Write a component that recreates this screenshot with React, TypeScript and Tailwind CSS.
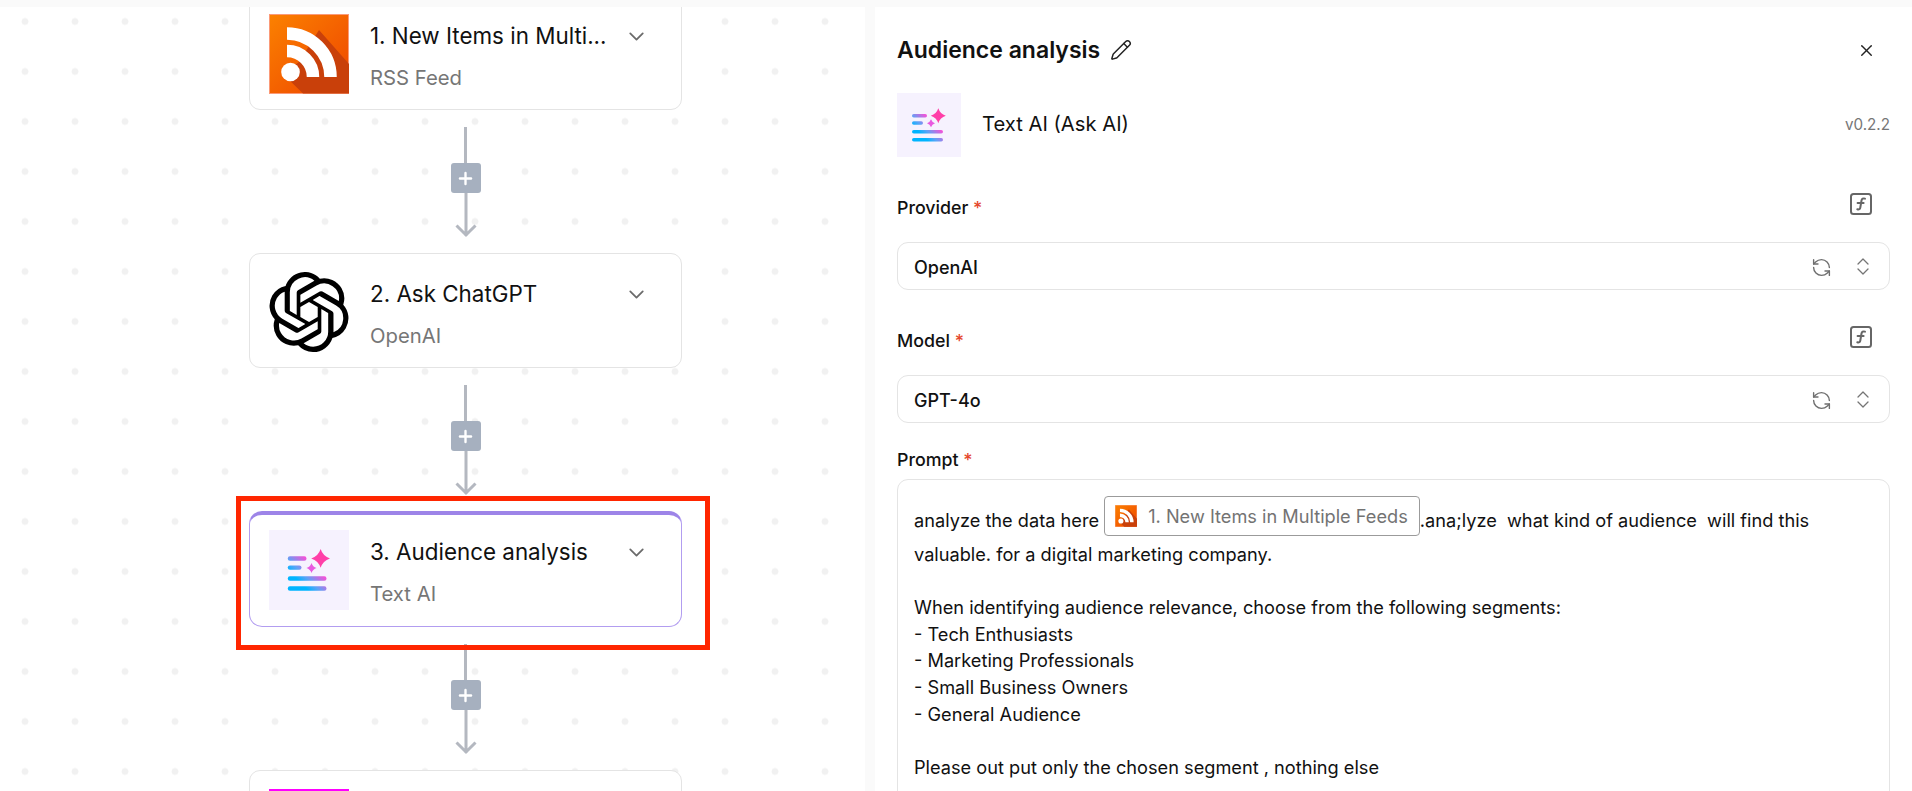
import { ChevronDown, Pencil, Plus, RefreshCcw, X } from 'lucide-react';
import { SiOpenai } from 'react-icons/si';

function RssIcon({ size }: { size: number }) {
  return (
    <svg width={size} height={size} viewBox="0 0 80 80" className="shrink-0">
      <defs>
        <linearGradient id="rssBg" x1="0" y1="0" x2="1" y2="1">
          <stop offset="0" stopColor="#fb8100" />
          <stop offset="1" stopColor="#ee4400" />
        </linearGradient>
      </defs>
      <rect x="0.5" y="0.5" width="79" height="79" fill="url(#rssBg)" stroke="#fb9a78" />
      <polygon points="50,16 80,50 80,79.5 34,79.5 14,60 30,48" fill="#c9400a" />
      <circle cx="21.5" cy="58" r="9.3" fill="#fff" />
      <path d="M18 19.5A43.5 43.5 0 0 1 61.5 63M18 37A26 26 0 0 1 44 63" fill="none" stroke="#fff" strokeWidth="12.5" />
    </svg>
  );
}

function TextAiIcon({ size }: { size: number }) {
  return (
    <svg width={size} height={size} viewBox="0 0 64 64" className="shrink-0">
      <defs>
        <linearGradient id="aiBar" gradientUnits="userSpaceOnUse" x1="15" y1="50" x2="45" y2="20">
          <stop offset="0.3" stopColor="#00b4ff" />
          <stop offset="0.45" stopColor="#5fa2f6" />
          <stop offset="0.7" stopColor="#f452d8" />
        </linearGradient>
      </defs>
      <rect width="64" height="64" fill="#f6f2fe" />
      <rect x="15" y="21" width="15" height="3.5" rx="1.75" fill="url(#aiBar)" />
      <rect x="15" y="28.3" width="11" height="3.5" rx="1.75" fill="url(#aiBar)" />
      <rect x="15" y="37" width="31" height="3.5" rx="1.75" fill="url(#aiBar)" />
      <rect x="15" y="45" width="31" height="3.5" rx="1.75" fill="url(#aiBar)" />
      <path d="M41.3 15.2Q43.1 20.9 48.8 22.7 43.1 24.5 41.3 30.2 39.5 24.5 33.8 22.7 39.5 20.9 41.3 15.2Z" fill="#ff3fa8" />
      <path d="M34 26.3Q35 29.3 38 30.3 35 31.3 34 34.3 33 31.3 30 30.3 33 29.3 34 26.3Z" fill="#e85ae0" />
    </svg>
  );
}

function FxIcon() {
  return (
    <svg width="22" height="22" viewBox="0 0 22 22" fill="none" stroke="#666" className="shrink-0">
      <rect x="1" y="1" width="20" height="20" rx="2.5" strokeWidth="2" />
      <path d="M15 5.6c-1.9-.6-3.2.1-3.5 1.9l-1.2 7c-.3 1.7-1.3 2.3-3 1.8M7.6 10h6" strokeWidth="2" strokeLinecap="round" />
    </svg>
  );
}

function UpDown() {
  return (
    <svg width="12" height="17" viewBox="0 0 12 17" fill="none" stroke="#757575" strokeWidth="1.3" strokeLinecap="round" strokeLinejoin="round" className="shrink-0">
      <path d="M1 6l5-5 5 5M1 11l5 5 5-5" />
    </svg>
  );
}

function Connector() {
  return (
    <div className="flex h-[143px] w-[30px] shrink-0 flex-col items-center pt-[17px]">
      <div className="h-[36px] w-[3px] bg-[#b4b8c0]" />
      <div className="flex h-[30px] w-[30px] shrink-0 items-center justify-center rounded-[3px] bg-[#a6b0bf]">
        <Plus size={19} strokeWidth={3} color="#fff" />
      </div>
      <svg width="24" height="45" viewBox="0 0 24 45" fill="none" stroke="#b4b8c0" strokeWidth="3" className="shrink-0">
        <path d="M12 0v43M2.5 32.5L12 42l9.5-9.5" />
      </svg>
    </div>
  );
}

function NodeText({ title, sub }: { title: string; sub: string }) {
  return (
    <div className="min-w-0 flex-1">
      <div className="mt-[4px] flex h-[36px] items-center">
        <span className="w-[255px] whitespace-nowrap text-[22.4px] text-[#111]">{title}</span>
        <ChevronDown size={25} strokeWidth={1.7} color="#6b6b6b" className="ml-[-1px]" />
      </div>
      <div className="mt-[10px] text-[20.3px] leading-[28px] text-[#767676]">{sub}</div>
    </div>
  );
}

function NodeCard({ title, sub, icon }: { title: string; sub: string; icon: React.ReactNode }) {
  return (
    <div className="flex h-[115px] w-[433px] shrink-0 gap-[21px] rounded-[11px] border border-[#e4e4e4] bg-white pt-[18px] pl-[19px]">
      {icon}
      <NodeText title={title} sub={sub} />
    </div>
  );
}

function SelectField({ label, value }: { label: string; value: string }) {
  return (
    <div>
      <div className="flex h-[22px] items-center justify-between pr-[18px]">
        <span className="relative top-[4px] text-[17.8px] font-medium text-[#111]">
          {label} <span className="text-[#e5482d]">*</span>
        </span>
        <FxIcon />
      </div>
      <div className="mt-[27px] flex h-[48px] items-center rounded-[11px] border border-[#e4e4e4] pl-[16px] pr-[20px] text-[18px] font-medium text-[#111]">
        <span className="flex-1 pt-[2px]">{value}</span>
        <RefreshCcw size={21} strokeWidth={1.6} color="#6f6f6f" className="mr-[25px] mt-[2px]" />
        <UpDown />
      </div>
    </div>
  );
}

export default function App() {
  return (
    <div className="flex h-[791px] w-full flex-col overflow-hidden bg-white font-['Inter',sans-serif]">
      <div className="h-[7px] shrink-0 bg-[#fafafa]" />
      <div className="flex min-h-0 flex-1">
        {/* canvas */}
        <div className="relative w-[865px] shrink-0 overflow-hidden bg-[radial-gradient(circle,#f1f1f1_3.2px,transparent_3.8px)] bg-[size:50px_50px] bg-[position:0_-10.5px]">
          <div className="ml-[249px] mt-[-12px] flex w-[433px] flex-col items-center">
            <NodeCard title="1. New Items in Multi..." sub="RSS Feed" icon={<RssIcon size={80} />} />
            <Connector />
            <NodeCard title="2. Ask ChatGPT" sub="OpenAI" icon={<SiOpenai size={80} color="#000" className="shrink-0" />} />
            <Connector />
            <div className="flex h-[116px] w-[433px] shrink-0 gap-[21px] rounded-[13px] border border-t-[4px] border-[#b29df0] border-t-[#9d84e8] bg-white pt-[15px] pl-[19px]">
              <TextAiIcon size={80} />
              <NodeText title="3. Audience analysis" sub="Text AI" />
            </div>
            <Connector />
            <div className="h-[115px] w-[433px] shrink-0 rounded-[11px] border border-[#e4e4e4] bg-white pl-[19px] pt-[18px]">
              <div className="h-[80px] w-[80px] bg-[#ff00ff]" />
            </div>
          </div>
          {/* red annotation box */}
          <div className="absolute left-[236px] top-[489px] h-[154px] w-[474px] border-[5px] border-[#ff2600]" />
        </div>

        {/* side panel */}
        <div className="min-w-0 flex-1 border-l-[10px] border-[#fafafa] pl-[22px] pr-[22px]">
          <div className="mt-[26px] flex h-[34px] items-center">
            <span className="text-[23px] font-semibold text-[#111]">Audience analysis</span>
            <Pencil size={22} strokeWidth={1.6} color="#222" className="ml-[10px]" />
            <X size={19} strokeWidth={1.8} color="#222" className="ml-auto mr-[14px]" />
          </div>
          <div className="mt-[26px] flex h-[64px] items-center">
            <TextAiIcon size={64} />
            <span className="ml-[21px] flex-1 -translate-y-[1px] text-[20.2px] text-[#111]">Text AI (Ask AI)</span>
            <span className="text-[15.2px] text-[#767676]">v0.2.2</span>
          </div>
          <div className="mt-[36px]">
            <SelectField label="Provider" value="OpenAI" />
          </div>
          <div className="mt-[36px]">
            <SelectField label="Model" value="GPT-4o" />
          </div>
          <div className="mt-[25px] h-[24px] text-[17.8px] font-medium leading-[24px] text-[#111]">
            Prompt <span className="text-[#e5482d]">*</span>
          </div>
          <div className="mt-[7px] h-[400px] whitespace-pre-wrap rounded-[11px] border border-[#e4e4e4] pl-[16px] pt-[16px] text-[18.2px] leading-[26.6px] text-[#111]">
            analyze the data here{' '}
            <span className="mb-[5px] inline-flex h-[40px] items-center rounded-[4px] border border-[#9b9b9b] pl-[10px] pr-[11px] align-baseline text-[#737373]">
              <RssIcon size={22} />
              <span className="ml-[11px]">1. New Items in Multiple Feeds</span>
            </span>
            .ana;lyze  what kind of audience  will find this
            <br />
            valuable. for a digital marketing company.
            <br />
            <br />
            When identifying audience relevance, choose from the following segments:
            <br />
            - Tech Enthusiasts
            <br />
            - Marketing Professionals
            <br />
            - Small Business Owners
            <br />
            - General Audience
            <br />
            <br />
            Please out put only the chosen segment , nothing else
          </div>
        </div>
      </div>
    </div>
  );
}
